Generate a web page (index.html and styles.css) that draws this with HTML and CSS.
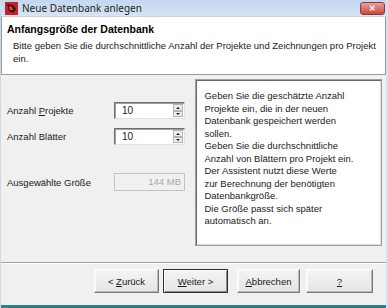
FILE: index.html
```html
<!DOCTYPE html>
<html>

<head>
    <title>Neue Datenbank anlegen</title>
    <link rel="stylesheet" href="styles.css">
</head>

<body>

    <div class="window">
        <div class="titlebar">
            <svg class="appicon" width="13" height="13" viewBox="0 0 13 13">
                <rect x="0" y="0" width="13" height="13" fill="#c8202a" />
                <path d="M2 2 L8 3 L11 7 L8 11 L4 9 L3 5 Z" fill="#3a1010" />
                <path d="M4 4 L7 5 L8 8 L5 8 Z" fill="#e05050" />
            </svg>
            <span class="title">Neue Datenbank anlegen</span>
            <div class="closebtn">&#x2715;</div>
        </div>

        <div class="header">
            <h1>Anfangsgröße der Datenbank</h1>
            <p>Bitte geben Sie die durchschnittliche Anzahl der Projekte und Zeichnungen pro Projekt<br>ein.</p>
        </div>

        <div class="content">
            <div class="form">
                <div class="row">
                    <label>Anzahl <u>P</u>rojekte</label>
                    <div class="spin">
                        <span class="val">10</span>
                        <div class="arrows">
                            <div class="arrow up"></div>
                            <div class="arrow down"></div>
                        </div>
                    </div>
                </div>
                <div class="row">
                    <label>Anzahl Blätter</label>
                    <div class="spin">
                        <span class="val">10</span>
                        <div class="arrows">
                            <div class="arrow up"></div>
                            <div class="arrow down"></div>
                        </div>
                    </div>
                </div>
                <div class="row sizerow">
                    <label>Ausgewählte Größe</label>
                    <div class="disabledbox">144 MB</div>
                </div>
            </div>

            <div class="info">
                Geben Sie die geschätzte Anzahl<br>
                Projekte ein, die in der neuen<br>
                Datenbank gespeichert werden<br>
                sollen.<br>
                Geben Sie die durchschnittliche<br>
                Anzahl von Blättern pro Projekt ein.<br>
                Der Assistent nutzt diese Werte<br>
                zur Berechnung der benötigten<br>
                Datenbankgröße.<br>
                Die Größe passt sich später<br>
                automatisch an.
            </div>
        </div>

        <div class="separator"></div>

        <div class="buttons">
            <button class="btn back">&lt; <u>Z</u>urück</button>
            <button class="btn default"><u>W</u>eiter &gt;</button>
            <button class="btn cancel"><u>A</u>bbrechen</button>
            <button class="btn help"><u>?</u></button>
        </div>

        <div class="taskbar"></div>
    </div>

</body>

</html>
```

FILE: styles.css
```css
* {
    box-sizing: border-box
}

body {
    margin: 0;
    font-family: "Liberation Sans", Arial, sans-serif;
    font-size: 9.5px;
    color: #1a1a1a;
}

.window {
    width: 388px;
    height: 308px;
    display: flex;
    flex-direction: column;
    background-color: #f0f0f0;
    border-left: 1px solid #c9d8ea;
    border-right: 2px solid #d4e1f0;
    overflow: hidden;
}

.window > div {
    flex-shrink: 0;
}

.titlebar {
    height: 16px;
    display: flex;
    align-items: center;
    padding-left: 4px;
    background: linear-gradient(to bottom, #c4d7ee, #d6e4f4);
}

.appicon {
    margin-right: 4px;
}

.title {
    font-family: "Noto Sans", "Liberation Sans", sans-serif;
    font-size: 10px;
    color: #1e1e1e;
}

.closebtn {
    margin-left: auto;
    margin-right: 1px;
    width: 25px;
    height: 13px;
    border-radius: 3px;
    border: 1px solid #8b3a3a;
    background: linear-gradient(to bottom, #e9a29a, #c9463c);
    color: white;
    font-size: 8px;
    font-weight: bold;
    text-align: center;
    line-height: 11px;
}

.header {
    height: 59px;
    background-color: #fff;
    border: 1px solid #9a9a9a;
    border-top-color: #d0d0d0;
    padding: 5px 0 0 5px;
}

.header h1 {
    margin: 0;
    font-size: 10.5px;
    font-weight: bold;
    line-height: 14px;
    color: #000;
}

.header p {
    margin: 3px 0 0 6px;
    line-height: 13px;
    white-space: nowrap;
}

.content {
    display: flex;
    padding: 4px 4px 0 6px;
    height: 187px;
}

.form {
    width: 189px;
    padding-top: 23px;
}

.row {
    display: flex;
    align-items: center;
    height: 17px;
    margin-bottom: 9px;
}

.row label {
    width: 107px;
}

.sizerow {
    margin-top: 28px;
    height: 18px;
}

.spin {
    width: 71px;
    height: 17px;
    display: flex;
    background-color: #fff;
    border-top: 1px solid #6f6f6f;
    border-left: 1px solid #6f6f6f;
    border-right: 1px solid #e3e3e3;
    border-bottom: 1px solid #e3e3e3;
    box-shadow: inset 1px 1px 0 #a0a0a0;
}

.val {
    flex: 1;
    padding-left: 7px;
    line-height: 15px;
    font-size: 10px;
}

.arrows {
    width: 11px;
    display: flex;
    flex-direction: column;
    padding: 1px 1px 1px 0;
}

.arrow {
    flex: 1;
    position: relative;
    background-color: #ececec;
    border: 1px solid #b4b4b4;
}

.arrow::after {
    content: "";
    position: absolute;
    left: 2px;
    top: 2px;
    border-left: 2px solid transparent;
    border-right: 2px solid transparent;
}

.arrow.up::after {
    border-bottom: 2px solid #222;
}

.arrow.down::after {
    top: 1px;
    border-top: 2px solid #222;
}

.disabledbox {
    width: 71px;
    height: 18px;
    border: 1px solid #c4c4c4;
    color: #a8a8a8;
    text-align: right;
    padding-right: 3px;
    line-height: 16px;
}

.info {
    width: 187px;
    height: 167px;
    background-color: #fff;
    border: 1px solid #a0a0a0;
    box-shadow: inset 1px 1px 0 #6a6a6a, inset -1px -1px 0 #dcdcdc;
    padding: 10px 6px 0 8px;
    line-height: 12.5px;
}

.separator {
    height: 2px;
    border-top: 1px solid #a0a0a0;
    border-bottom: 1px solid #fff;
}

.buttons {
    display: flex;
    padding: 5px 0 0 93px;
    height: 41px;
}

.btn {
    height: 24px;
    margin-right: 4px;
    font-family: "Liberation Sans", Arial, sans-serif;
    font-size: 9.5px;
    color: #1a1a1a;
    background: linear-gradient(to bottom, #f4f4f4, #e4e4e4);
    border-top: 1px solid #fff;
    border-left: 1px solid #fff;
    border-right: 1px solid #7a7a7a;
    border-bottom: 1px solid #7a7a7a;
    box-shadow: inset -1px -1px 0 #b8b8b8, inset 1px 1px 0 #f8f8f8;
    padding: 0;
}

.back {
    width: 65px;
}

.default {
    width: 65px;
    border: 1px solid #303030;
    box-shadow: inset 1px 1px 0 #fff, inset -1px -1px 0 #8a8a8a;
}

.cancel {
    width: 63px;
    margin-left: 5px;
}

.help {
    width: 67px;
    margin-left: 2px;
}

.taskbar {
    height: 3px;
    background-color: #2c7f8c;
    margin-left: -1px;
}
```
